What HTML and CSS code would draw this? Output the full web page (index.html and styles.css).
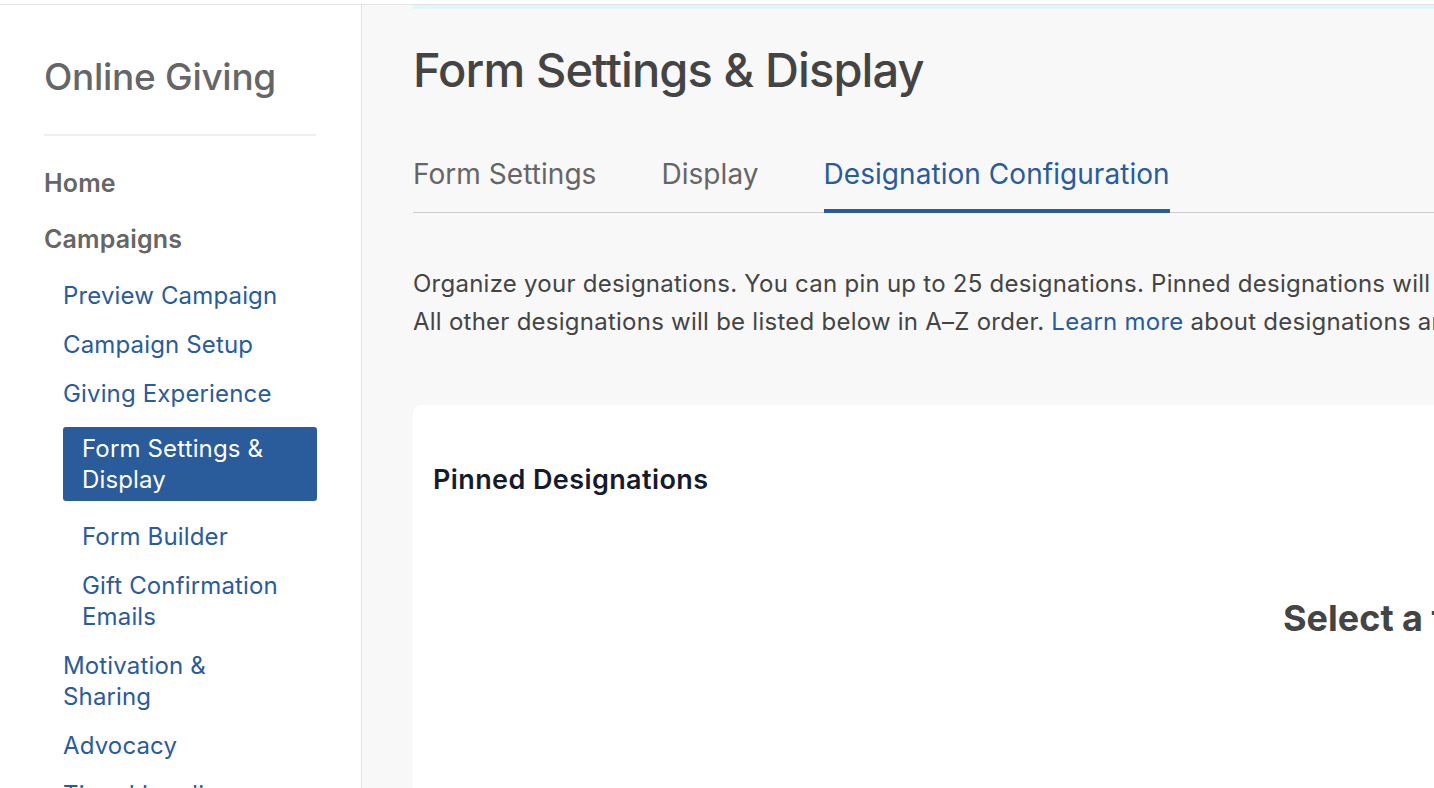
FILE: index.html
```html
<!DOCTYPE html>
<html lang="en">
<head>
    <meta charset="UTF-8">
    <meta name="viewport" content="width=device-width, initial-scale=1.0">
    <title>Form Settings &amp; Display</title>
    <link rel="stylesheet" href="styles.css">
</head>
<body>
    <div class="layout">
        <!-- left navigation -->
        <aside class="sidebar">
            <div class="side-title">Online Giving</div>
            <div class="side-divider"></div>
            <nav class="side-nav">
                <a class="nav-top" href="#">Home</a>
                <a class="nav-top" href="#">Campaigns</a>
                <a class="nav-sub" href="#">Preview Campaign</a>
                <a class="nav-sub" href="#">Campaign Setup</a>
                <a class="nav-sub" href="#">Giving Experience</a>
                <a class="nav-sub2 active" href="#">Form Settings &amp; Display</a>
                <a class="nav-sub2" href="#">Form Builder</a>
                <a class="nav-sub2" href="#">Gift Confirmation Emails</a>
                <a class="nav-sub" href="#">Motivation &amp; Sharing</a>
                <a class="nav-sub" href="#">Advocacy</a>
                <a class="nav-sub" href="#">Timed Landing</a>
            </nav>
        </aside>

        <main class="main">
            <div class="top-strip"></div>
            <h1 class="page-title">Form Settings &amp; Display</h1>

            <div class="tabs">
                <a class="tab" href="#">Form Settings</a>
                <a class="tab" href="#">Display</a>
                <a class="tab active" href="#">Designation Configuration</a>
            </div>

            <p class="intro">
                Organize your designations. You can pin up to 25 designations. Pinned designations will appear at the top of the list.<br>
                All other designations will be listed below in A&ndash;Z order. <a href="#">Learn more</a> about designations and how donors see them.
            </p>

            <div class="card">
                <div class="card-title">Pinned Designations</div>
                <div class="empty">Select a template</div>
            </div>
        </main>
    </div>
</body>
</html>
```

FILE: styles.css
```css
body {
    margin: 0;
    background-color: #ffffff;
    font-family: Inter, "Noto Sans", sans-serif;
    overflow: hidden;
}

.layout {
    display: flex;
    margin-top: 4px;
    border-top: 1px solid #e4e4e4;
    min-height: 783px;
}

/* sidebar */
.sidebar {
    width: 362px;
    flex-shrink: 0;
    box-sizing: border-box;
    padding: 49px 45px 0 44px;
    background-color: #ffffff;
    border-right: 1px solid #e2e2e2;
}

.side-title {
    font-size: 37px;
    font-weight: 500;
    color: #666666;
    letter-spacing: -0.3px;
    line-height: 46px;
}

.side-divider {
    height: 2px;
    background-color: #efefef;
    margin: 34px 0 32px;
}

.side-nav {
    display: flex;
    flex-direction: column;
    align-items: flex-start;
}

.side-nav a {
    text-decoration: none;
    font-size: 24px;
    line-height: 31px;
    letter-spacing: 0.15px;
}

.nav-top {
    color: #666666;
    font-weight: 600;
    margin-bottom: 25px;
}

.side-nav .nav-top {
    font-size: 25px;
}

.nav-sub {
    color: #2a5b9a;
    margin-left: 19px;
    margin-bottom: 18px;
    max-width: 222px;
}

.nav-sub2 {
    color: #2a5b9a;
    margin-left: 38px;
    margin-bottom: 18px;
    max-width: 222px;
}

.nav-sub2.active {
    margin-left: 19px;
    width: 254px;
    max-width: none;
    box-sizing: border-box;
    padding: 6px 38px 6px 19px;
    background-color: #2a5b9a;
    color: #ffffff;
    border-radius: 3px;
    margin-top: 0;
    margin-bottom: 20px;
}

/* main area */
.main {
    flex: 1;
    background-color: #f8f8f8;
    padding: 0 0 0 51px;
    min-width: 0;
}

.top-strip {
    height: 4px;
    background-color: #dff6fd;
}

.page-title {
    margin: 29px 0 0;
    font-size: 47px;
    font-weight: 500;
    color: #444444;
    letter-spacing: -0.9px;
    line-height: 64px;
}

.tabs {
    display: flex;
    gap: 65px;
    margin-top: 55px;
    border-bottom: 1px solid #cccccc;
}

.tab {
    font-size: 28px;
    color: #666666;
    text-decoration: none;
    padding-bottom: 18px;
    border-bottom: 4px solid transparent;
    margin-bottom: -1px;
    line-height: 34px;
    letter-spacing: 0.05px;
}

.tab.active {
    color: #2a5b9a;
    border-bottom-color: #2a5b9a;
}

.intro {
    margin: 52px 0 0;
    font-size: 24px;
    line-height: 38px;
    color: #444444;
    letter-spacing: 0.25px;
    white-space: nowrap;
}

.intro a {
    color: #2a5b9a;
    text-decoration: none;
}

.card {
    margin-top: 64px;
    background-color: #ffffff;
    border-top-left-radius: 8px;
    padding: 58px 20px 200px;
    min-height: 400px;
}

.card-title {
    font-size: 27px;
    font-weight: 600;
    color: #161b2b;
    letter-spacing: 0.4px;
}

.empty {
    margin-top: 100px;
    padding-left: 850px;
    font-size: 36px;
    font-weight: 700;
    color: #444444;
    white-space: nowrap;
}
```
